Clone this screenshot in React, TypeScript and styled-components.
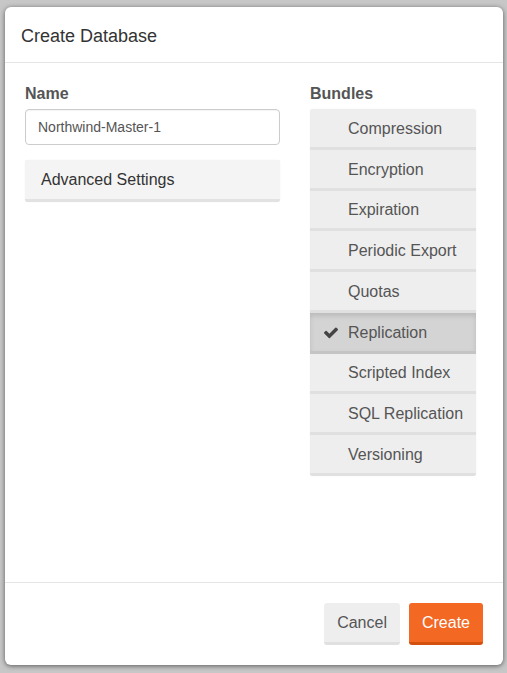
import React from "react";
import styled, { createGlobalStyle } from "styled-components";

const Global = createGlobalStyle`
  html, body { margin: 0; padding: 0; }
  body {
    background: #c7c7c7;
    font-family: "Liberation Sans", Arial, sans-serif;
    color: #333;
  }
`;

const Page = styled.div`
  padding: 7px 4px 8px 5px;
  height: 673px;
  box-sizing: border-box;
`;

const Modal = styled.div`
  width: 498px;
  height: 658px;
  background: #fff;
  border-radius: 6px;
  box-shadow: 0 1px 5px rgba(0, 0, 0, 0.55);
  display: flex;
  flex-direction: column;
  overflow: hidden;
`;

const Header = styled.div`
  height: 56px;
  box-sizing: border-box;
  border-bottom: 1px solid #e5e5e5;
  padding: 3px 16px 0;
  display: flex;
  align-items: center;
`;

const Title = styled.h4`
  margin: 0;
  font-size: 18px;
  font-weight: normal;
  color: #333;
`;

const Body = styled.div`
  flex: 1;
  padding: 21px 20px 20px;
  display: flex;
  gap: 30px;
`;

const LeftCol = styled.div`
  width: 255px;
  display: flex;
  flex-direction: column;
`;

const RightCol = styled.div`
  width: 166px;
  display: flex;
  flex-direction: column;
`;

const Label = styled.div`
  font-size: 16px;
  font-weight: bold;
  color: #555;
  line-height: 20px;
  margin-bottom: 5px;
`;

const Input = styled.input`
  box-sizing: border-box;
  width: 255px;
  height: 36px;
  border: 1px solid #ccc;
  border-radius: 4px;
  padding: 0 12px;
  font-family: "Liberation Sans", Arial, sans-serif;
  font-size: 14px;
  color: #555;
  outline: none;
  box-shadow: inset 0 1px 1px rgba(0, 0, 0, 0.05);
`;

const Panel = styled.div`
  margin-top: 15px;
  box-sizing: border-box;
  height: 42px;
  background: #f4f4f4;
  border-radius: 3px;
  border-bottom: 3px solid #e2e2e2;
  box-shadow: 0 0 1px rgba(0, 0, 0, 0.12);
  display: flex;
  align-items: center;
  padding: 1px 16px 0;
  font-size: 16px;
  color: #333;
`;

const List = styled.div`
  display: flex;
  flex-direction: column;
  border-radius: 3px;
  overflow: hidden;
  box-shadow: 0 0 1px rgba(0, 0, 0, 0.15);
`;

const Item = styled.div<{ $active?: boolean }>`
  box-sizing: border-box;
  height: 40.75px;
  display: flex;
  align-items: center;
  padding: 2px 0 0 14px;
  font-size: 16px;
  color: #555;
  background: ${(p) => (p.$active ? "#d4d4d4" : "#eeeeee")};
  border-bottom: 3px solid ${(p) => (p.$active ? "#c4c4c4" : "#e0e0e0")};
  box-shadow: ${(p) => (p.$active ? "inset 0 3px 5px rgba(0,0,0,0.12)" : "none")};
`;

const CheckSlot = styled.span`
  width: 24px;
  display: inline-flex;
  align-items: center;
  color: #444;
`;

const Footer = styled.div`
  border-top: 1px solid #e5e5e5;
  padding: 20px 20px 20px;
  display: flex;
  justify-content: flex-end;
  gap: 9px;
`;

const Button = styled.button<{ $primary?: boolean }>`
  box-sizing: border-box;
  height: 42px;
  padding: 0 13px;
  font-family: "Liberation Sans", Arial, sans-serif;
  font-size: 16px;
  border: none;
  border-radius: 3px;
  cursor: pointer;
  color: ${(p) => (p.$primary ? "#fff" : "#555")};
  background: ${(p) => (p.$primary ? "#f36823" : "#eeeeee")};
  border-bottom: 3px solid ${(p) => (p.$primary ? "#d3500f" : "#e0e0e0")};
`;

const Check = () => (
  <svg width="14" height="12" viewBox="0 0 1550 1200" aria-hidden>
    <path
      fill="currentColor"
      d="M1550 232q0 40-28 68l-724 724-136 136q-28 28-68 28t-68-28l-136-136-362-362q-28-28-28-68t28-68l136-136q28-28 68-28t68 28l294 295 656-657q28-28 68-28t68 28l136 136q28 28 28 68z"
    />
  </svg>
);

const bundles = [
  "Compression",
  "Encryption",
  "Expiration",
  "Periodic Export",
  "Quotas",
  "Replication",
  "Scripted Index",
  "SQL Replication",
  "Versioning",
];

export default function App() {
  return (
    <>
      <Global />
      <Page>
        <Modal>
          <Header>
            <Title>Create Database</Title>
          </Header>
          <Body>
            <LeftCol>
              <Label>Name</Label>
              <Input defaultValue="Northwind-Master-1" />
              <Panel>Advanced Settings</Panel>
            </LeftCol>
            <RightCol>
              <Label>Bundles</Label>
              <List>
                {bundles.map((b) => (
                  <Item key={b} $active={b === "Replication"}>
                    <CheckSlot>{b === "Replication" ? <Check /> : null}</CheckSlot>
                    {b}
                  </Item>
                ))}
              </List>
            </RightCol>
          </Body>
          <Footer>
            <Button>Cancel</Button>
            <Button $primary>Create</Button>
          </Footer>
        </Modal>
      </Page>
    </>
  );
}
